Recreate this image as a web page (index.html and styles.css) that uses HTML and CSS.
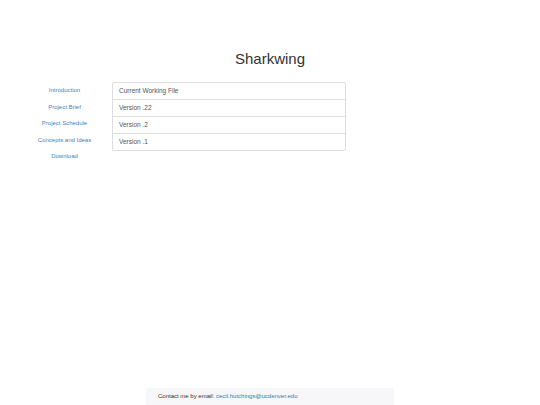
FILE: index.html
```html
<!DOCTYPE html>
<html>
<head>
<meta charset="utf-8">
<link rel="stylesheet" href="styles.css">
</head>
<body>
<div class="page">
  <header class="header"><h1 class="title">Sharkwing</h1></header>
  <div class="row">
    <nav class="sidebar">
      <a class="nav-link" href="#">Introduction</a>
      <a class="nav-link" href="#">Project Brief</a>
      <a class="nav-link" href="#">Project Schedule</a>
      <a class="nav-link" href="#">Concepts and Ideas</a>
      <a class="nav-link" href="#">Download</a>
    </nav>
    <ul class="list-group">
      <li class="list-item">Current Working File</li>
      <li class="list-item">Version .22</li>
      <li class="list-item">Version .2</li>
      <li class="list-item">Version .1</li>
    </ul>
  </div>
  <footer class="footer">Contact me by email: <a class="mail" href="#">cecil.hutchings@ucdenver.edu</a></footer>
</div>
</body>
</html>
```
FILE: styles.css
```css
html, body { margin: 0; padding: 0; background: #fff; }
body { font-family: "Liberation Sans", Arial, sans-serif; color: #333; }
.page { display: flex; flex-direction: column; min-height: 100vh; }
.header { height: 82px; display: flex; align-items: flex-start; justify-content: center; box-sizing: border-box; }
.title { margin: 50px 0 0 0; font-size: 15px; font-weight: normal; line-height: 18px; color: #333; }
.row { display: grid; grid-template-columns: 112px 234px; }
.sidebar { display: flex; flex-direction: column; align-items: center; padding-left: 17px; }
.nav-link { font-size: 6px; line-height: 16.5px; color: #3d84c2; text-decoration: none; }
.list-group { list-style: none; margin: 0; padding: 0; }
.list-item { font-size: 6.5px; line-height: 6px; padding: 5px 6px; border: 1px solid #ddd; margin-bottom: -1px; color: #555; }
.list-item:first-child { border-radius: 2px 2px 0 0; }
.list-item:last-child { border-radius: 0 0 2px 2px; }
.footer { margin-top: auto; margin-left: 146px; width: 236px; padding: 5px 0 5px 12px; font-size: 6px; line-height: 7px; background: #f7f7fa; color: #333; }
.mail { color: #337ab7; text-decoration: none; }
```
